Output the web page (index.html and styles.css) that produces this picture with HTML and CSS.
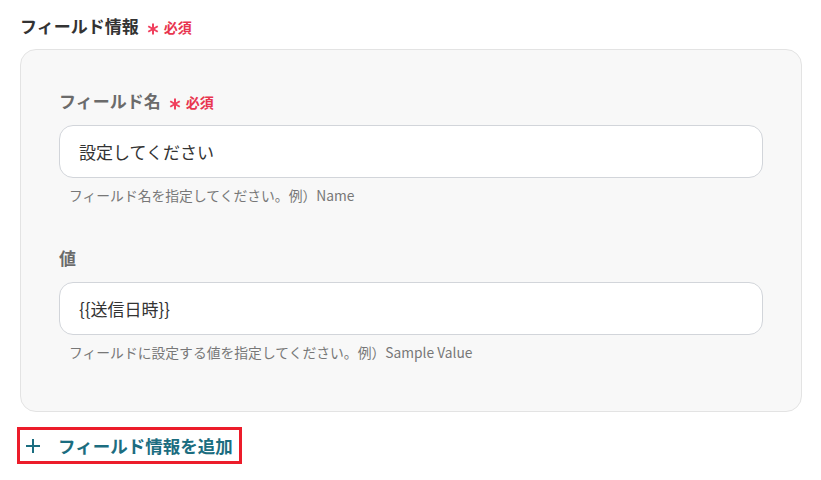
FILE: index.html
```html
<!DOCTYPE html>
<html lang="ja">
<head>
<meta charset="utf-8">
<link rel="stylesheet" href="styles.css">
</head>
<body>
<div class="page">
  <div class="title">フィールド情報<svg class="ast" width="12" height="12" viewBox="0 0 12 12"><path d="M6 0.5v11M1.24 3.25 10.76 8.75M1.24 8.75 10.76 3.25" stroke="#f0405e" stroke-width="2" fill="none"/></svg><span class="req">必須</span></div>
  <div class="panel">
    <div class="label">フィールド名<svg class="ast" width="12" height="12" viewBox="0 0 12 12"><path d="M6 0.5v11M1.24 3.25 10.76 8.75M1.24 8.75 10.76 3.25" stroke="#f0405e" stroke-width="2" fill="none"/></svg><span class="req">必須</span></div>
    <div class="input">設定してください</div>
    <div class="help">フィールド名を指定してください。例）Name</div>
    <div class="label second">値</div>
    <div class="input">{{送信日時}}</div>
    <div class="help">フィールドに設定する値を指定してください。例）Sample Value</div>
  </div>
  <div class="add">
    <svg class="plus" width="16" height="16" viewBox="0 0 16 16"><path d="M8 1v14M1 8h14" stroke="#1b6d80" stroke-width="2" fill="none"/></svg>
    <span class="add-text">フィールド情報を追加</span>
  </div>
</div>
</body>
</html>
```
FILE: styles.css
```css
* { box-sizing: border-box; }
body {
  margin: 0;
  background: #fff;
  font-family: "Noto Sans CJK JP", "Noto Sans", sans-serif;
}
.page {
  padding: 14px 19px 0 20px;
}
.title {
  font-size: 17px;
  line-height: 24px;
  font-weight: 700;
  color: #333;
  display: flex;
  align-items: center;
}
.ast {
  flex: none;
  margin: 0 5px 0 8px;
  position: relative;
  top: 3px;
}
.req {
  color: #e8354f;
  font-size: 14px;
  font-weight: 700;
  position: relative;
  top: 1px;
}
.panel {
  margin-top: 11px;
  background: #f8f8f8;
  border: 1px solid #e3e3e3;
  border-radius: 16px;
  padding: 39px 38px 50px 38px;
}
.label {
  font-size: 17px;
  line-height: 24px;
  font-weight: 700;
  color: #6b6b6b;
  display: flex;
  align-items: center;
}
.label.second {
  margin-top: 42px;
}
.input {
  margin-top: 12px;
  height: 53px;
  background: #fff;
  border: 1px solid #d2d5da;
  border-radius: 14px;
  padding: 0 19px;
  display: flex;
  align-items: center;
  font-size: 17px;
  color: #333;
}
.help {
  margin-top: 8px;
  padding-left: 10px;
  font-size: 13.8px;
  line-height: 18px;
  color: #777;
}
.add {
  margin-top: 15px;
  margin-left: -3px;
  width: 225px;
  height: 37px;
  border: 3px solid #ec1c2a;
  display: flex;
  align-items: center;
  padding-left: 5px;
}
.plus {
  flex: none;
}
.add-text {
  margin-left: 17px;
  font-size: 17.5px;
  font-weight: 700;
  color: #1b6d80;
}
```
